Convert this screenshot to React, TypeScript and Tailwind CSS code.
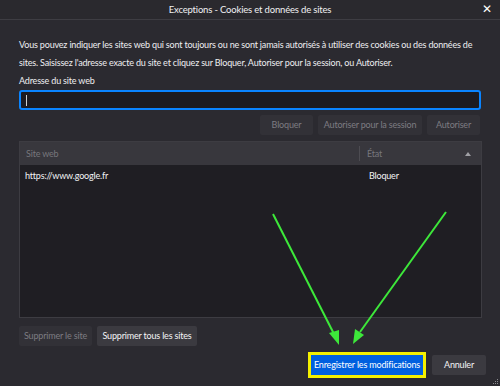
import React from "react";

export default function App() {
  const font = { fontFamily: 'Lato, "Noto Sans", sans-serif' };
  return (
    <div className="relative w-[500px] h-[386px] overflow-hidden bg-[#2b2a30] text-[#f9f9fa] tracking-[-0.18px]" style={font}>
      {/* Title bar */}
      <div className="relative h-[20px] flex items-center justify-center border-b border-[#3e3d43] bg-[#2a292e]">
        <span className="text-[9.5px] leading-none text-[#f0f0f2] whitespace-nowrap">Exceptions - Cookies et données de sites</span>
        <span className="absolute right-[8px] top-[3px] text-[12px] leading-none text-white">✕</span>
      </div>

      <div className="px-[19px] pt-[16px]">
        <p className="text-[9px] leading-[18px] text-[#eeeef0] whitespace-nowrap">
          Vous pouvez indiquer les sites web qui sont toujours ou ne sont jamais autorisés à utiliser des cookies ou des données de
          <br />
          sites. Saisissez l'adresse exacte du site et cliquez sur Bloquer, Autoriser pour la session, ou Autoriser.
        </p>
        <div className="mt-[2px] text-[9px] leading-[14px] text-[#eeeef0]">Adresse du site web</div>
        <div className="mt-[2px] w-[462px] h-[20px] rounded-[3px] border-2 border-[#0a84ff] bg-[#1c1b21] flex items-center pl-[5px]">
          <div className="w-[1px] h-[11px] bg-[#d0d0d0]" />
        </div>

        <div className="mt-[5px] flex justify-end gap-[5px] pr-[1px]">
          <button className="h-[20px] w-[53px] rounded-[2px] bg-[#323137] text-[9px] text-[#7d7c82] whitespace-nowrap">Bloquer</button>
          <button className="h-[20px] w-[104px] rounded-[2px] bg-[#323137] text-[9px] text-[#7d7c82] whitespace-nowrap">Autoriser pour la session</button>
          <button className="h-[20px] w-[53px] rounded-[2px] bg-[#323137] text-[9px] text-[#7d7c82] whitespace-nowrap">Autoriser</button>
        </div>

        <div className="mt-[6px] w-[463px] h-[177px] border border-[#3d3c42] bg-[#1f1e23] flex flex-col">
          <div className="h-[23px] bg-[#38373d] flex items-center text-[9px] text-[#77767c]">
            <div className="flex-1 pl-[6px]">Site web</div>
            <div className="w-[1px] h-[15px] bg-[#4d4c52]" />
            <div className="w-[121px] pl-[7px] flex items-center justify-between pr-[10px]">
              <span>État</span>
              <svg width="6" height="4" viewBox="0 0 6 4"><path d="M0 4 L3 0 L6 4 Z" fill="#a0a0a5" /></svg>
            </div>
          </div>
          <div className="h-[22px] flex items-center text-[9px] text-[#f4f4f6]">
            <div className="flex-1 pl-[5px]">https://www.google.fr</div>
            <div className="w-[122px] pl-[10px]">Bloquer</div>
          </div>
        </div>

        <div className="mt-[8px] flex gap-[5px]">
          <button className="h-[20px] w-[73px] rounded-[2px] bg-[#323137] text-[9px] text-[#7d7c82] whitespace-nowrap">Supprimer le site</button>
          <button className="h-[20px] w-[100px] rounded-[2px] bg-[#3b3a40] text-[9px] text-[#f4f4f6] whitespace-nowrap">Supprimer tous les sites</button>
        </div>

        <div className="mt-[6px] flex justify-end items-center gap-[6px] mr-[-5px]">
          <div className="border-[3px] border-[#f4f000]">
            <button className="block h-[20px] w-[112px] bg-[#0060df] text-[9px] text-white whitespace-nowrap">Enregistrer les modifications</button>
          </div>
          <button className="h-[20px] w-[54px] rounded-[2px] bg-[#3b3a40] text-[9px] text-[#f4f4f6] whitespace-nowrap">Annuler</button>
        </div>
      </div>

      {/* Annotation arrows */}
      <svg className="absolute left-0 top-0 pointer-events-none" width="500" height="386">
        <line x1="273" y1="214" x2="334" y2="334" stroke="#3de83a" strokeWidth="2" />
        <polygon points="339,345 329,333 339,330" fill="#3de83a" />
        <line x1="446" y1="212" x2="360" y2="332" stroke="#3de83a" strokeWidth="2" />
        <polygon points="353,344 355,329 364,335" fill="#3de83a" />
      </svg>

      {/* resize grip */}
      <svg className="absolute right-[1px] bottom-[1px]" width="8" height="8" viewBox="0 0 8 8">
        <rect x="6" y="2" width="1" height="1" fill="#8a8a8e" />
        <rect x="4" y="4" width="1" height="1" fill="#8a8a8e" />
        <rect x="6" y="4" width="1" height="1" fill="#8a8a8e" />
        <rect x="2" y="6" width="1" height="1" fill="#8a8a8e" />
        <rect x="4" y="6" width="1" height="1" fill="#8a8a8e" />
        <rect x="6" y="6" width="1" height="1" fill="#8a8a8e" />
      </svg>
    </div>
  );
}
